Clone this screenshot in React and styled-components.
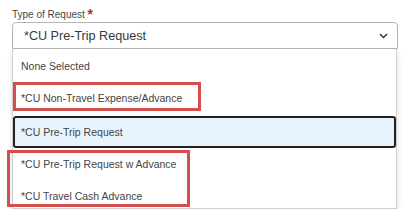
import React from 'react';
import styled, { createGlobalStyle } from 'styled-components';

const GlobalStyle = createGlobalStyle`
  body {
    margin: 0;
    background: #ffffff;
    font-family: "Liberation Sans", Arial, sans-serif;
  }
`;

const options = [
  'None Selected',
  '*CU Non-Travel Expense/Advance',
  '*CU Pre-Trip Request',
  '*CU Pre-Trip Request w Advance',
  '*CU Travel Cash Advance',
];

const App = () => {
  const selected = '*CU Pre-Trip Request';
  return (
    <>
      <GlobalStyle />
      <Field>
        <Label>
          Type of Request <Required>*</Required>
        </Label>
        <SelectBox>
          <Value>{selected}</Value>
          <Chevron width="9" height="6" viewBox="0 0 9 6">
            <path d="M1 1l3.5 3.5L8 1" fill="none" stroke="#333" strokeWidth="1.5" />
          </Chevron>
        </SelectBox>
        <MenuWrap>
          <Menu>
            {options.map((o) => (
              <Option key={o} $active={o === selected}>
                {o}
              </Option>
            ))}
          </Menu>
          <Highlight $top={33} $left={1} $width={188} $height={29} />
          <Highlight $top={101} $left={-5} $width={183} $height={57} />
        </MenuWrap>
      </Field>
    </>
  );
};

const Field = styled.div`
  display: flex;
  flex-direction: column;
  padding: 7px 6px 0 12px;
  width: 386px;
`;

const Label = styled.label`
  font-size: 10px;
  color: #4a4a4a;
  line-height: 14px;
  height: 15px;
`;

const Required = styled.span`
  color: #c0282d;
  font-size: 14px;
  font-weight: bold;
  vertical-align: -1px;
`;

const SelectBox = styled.div`
  display: flex;
  align-items: center;
  justify-content: space-between;
  height: 27px;
  box-sizing: border-box;
  border: 1px solid #b5b5b5;
  border-radius: 4px 4px 0 0;
  padding: 0 9px 0 11px;
  background: #fff;
`;

const Value = styled.span`
  font-size: 12.6px;
  color: #383838;
`;

const Chevron = styled.svg`
  display: block;
`;

const MenuWrap = styled.div`
  position: relative;
  width: 385px;
`;

const Menu = styled.div`
  display: flex;
  flex-direction: column;
  height: 160px;
  padding-top: 1px;
  overflow: hidden;
  box-sizing: border-box;
  border: 1px solid #cfcfcf;
  border-top: none;
  background: #fff;
  box-shadow: 0 3px 6px rgba(0, 0, 0, 0.12);
`;

const Option = styled.div`
  flex: none;
  display: flex;
  align-items: center;
  height: 32px;
  box-sizing: border-box;
  padding-left: ${(p) => (p.$active ? '6px' : '8px')};
  margin-top: ${(p) => (p.$active ? '2px' : '0')};
  font-size: 10.5px;
  color: #444;
  background: ${(p) => (p.$active ? '#e8f4fd' : '#fff')};
  border: ${(p) => (p.$active ? '2px solid #222' : 'none')};
  border-radius: ${(p) => (p.$active ? '3px' : '0')};
`;

const Highlight = styled.div`
  position: absolute;
  top: ${(p) => p.$top}px;
  left: ${(p) => p.$left}px;
  width: ${(p) => p.$width}px;
  height: ${(p) => p.$height}px;
  box-sizing: border-box;
  border: 3px solid #d24f4b;
  pointer-events: none;
`;

export default App;
